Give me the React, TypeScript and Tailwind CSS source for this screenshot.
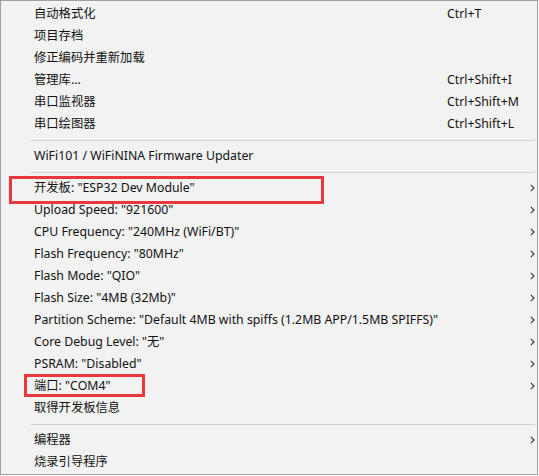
import React from "react";

type Item =
  | { kind: "sep" }
  | { kind: "item"; label: string; shortcut?: string; sub?: boolean };

const items: Item[] = [
  { kind: "item", label: "自动格式化", shortcut: "Ctrl+T" },
  { kind: "item", label: "项目存档" },
  { kind: "item", label: "修正编码并重新加载" },
  { kind: "item", label: "管理库...", shortcut: "Ctrl+Shift+I" },
  { kind: "item", label: "串口监视器", shortcut: "Ctrl+Shift+M" },
  { kind: "item", label: "串口绘图器", shortcut: "Ctrl+Shift+L" },
  { kind: "sep" },
  { kind: "item", label: "WiFi101 / WiFiNINA Firmware Updater" },
  { kind: "sep" },
  { kind: "item", label: '开发板: "ESP32 Dev Module"', sub: true },
  { kind: "item", label: 'Upload Speed: "921600"', sub: true },
  { kind: "item", label: 'CPU Frequency: "240MHz (WiFi/BT)"', sub: true },
  { kind: "item", label: 'Flash Frequency: "80MHz"', sub: true },
  { kind: "item", label: 'Flash Mode: "QIO"', sub: true },
  { kind: "item", label: 'Flash Size: "4MB (32Mb)"', sub: true },
  {
    kind: "item",
    label: 'Partition Scheme: "Default 4MB with spiffs (1.2MB APP/1.5MB SPIFFS)"',
    sub: true,
  },
  { kind: "item", label: 'Core Debug Level: "无"', sub: true },
  { kind: "item", label: 'PSRAM: "Disabled"', sub: true },
  { kind: "item", label: '端口: "COM4"', sub: true },
  { kind: "item", label: "取得开发板信息" },
  { kind: "sep" },
  { kind: "item", label: "编程器", sub: true },
  { kind: "item", label: "烧录引导程序" },
];

function Chevron() {
  return (
    <svg width="5" height="8" viewBox="0 0 5 8" className="text-[#333]">
      <path d="M0.8 0.8 L4 4 L0.8 7.2" fill="none" stroke="currentColor" strokeWidth="1.1" />
    </svg>
  );
}

export default function App() {
  return (
    <div className="relative h-[475px] w-[538px] border border-[#a0a0a0] bg-[#f2f2f2] pt-[2px] font-['Noto_Sans','Noto_Sans_CJK_SC',sans-serif] text-[12.3px] text-[#111]">
      {items.map((it, i) =>
        it.kind === "sep" ? (
          <div key={i} className="flex h-[10px] items-center pl-[30px] pr-[2px]">
            <div className="h-px w-full bg-[#d0d0d0]" />
          </div>
        ) : (
          <div key={i} className="flex h-[22px] items-center pl-[33px] pr-[2px]">
            <span className="flex-1 whitespace-nowrap">{it.label}</span>
            {it.shortcut && <span className="w-[88px] whitespace-nowrap">{it.shortcut}</span>}
            {it.sub && <Chevron />}
          </div>
        )
      )}

      {/* highlight boxes */}
      <div className="pointer-events-none absolute left-[8px] top-[175px] h-[28px] w-[315px] border-[3px] border-[#e8383d]" />
      <div className="pointer-events-none absolute left-[23px] top-[373px] h-[23px] w-[121px] border-[3px] border-[#e8383d]" />
    </div>
  );
}
